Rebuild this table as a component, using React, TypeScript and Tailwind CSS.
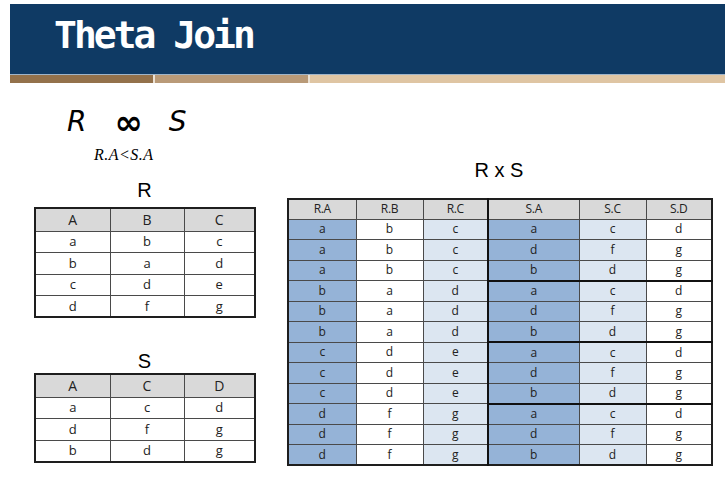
import React from "react";

const R = [
  ["a", "b", "c"],
  ["b", "a", "d"],
  ["c", "d", "e"],
  ["d", "f", "g"],
];
const S = [
  ["a", "c", "d"],
  ["d", "f", "g"],
  ["b", "d", "g"],
];
const RxS = R.flatMap((r) => S.map((s) => [...r, ...s]));

const cellFont = { fontFamily: "'Open Sans', 'Noto Sans', sans-serif" };

function SmallTable({ head, rows }: { head: string[]; rows: string[][] }) {
  const widths = [75, 74, 71];
  return (
    <table className="table-fixed border-collapse border-2 border-[#1e1e1e] text-[13px] text-[#222]" style={{ ...cellFont, width: 220 }}>
      <colgroup>
        {widths.map((w, i) => (
          <col key={i} style={{ width: w }} />
        ))}
      </colgroup>
      <thead>
        <tr className="h-[23px] bg-[#d9d9d9]">
          {head.map((h) => (
            <th key={h} className="border border-[#4a4a4a] p-0 text-center text-[14px] font-normal leading-none">
              {h}
            </th>
          ))}
        </tr>
      </thead>
      <tbody>
        {rows.map((r, i) => (
          <tr key={i} className="h-[21.5px] bg-white">
            {r.map((v, j) => (
              <td key={j} className="border border-[#4a4a4a] p-0 text-center leading-none">
                {v}
              </td>
            ))}
          </tr>
        ))}
      </tbody>
    </table>
  );
}

function ProductTable() {
  const head = ["R.A", "R.B", "R.C", "S.A", "S.C", "S.D"];
  const widths = [68, 67, 65, 91, 67, 66];
  const fills = ["bg-[#95b3d7]", "bg-white", "bg-[#dce6f1]", "bg-[#95b3d7]", "bg-[#dce6f1]", "bg-white"];
  return (
    <table className="table-fixed border-collapse border-2 border-[#1e1e1e] text-[12px] text-[#222]" style={{ ...cellFont, width: 424 }}>
      <colgroup>
        {widths.map((w, i) => (
          <col key={i} style={{ width: w }} />
        ))}
      </colgroup>
      <thead>
        <tr className="h-[20px] bg-[#d9d9d9]">
          {head.map((h, j) => (
            <th
              key={h}
              className={`border border-[#4a4a4a] p-0 text-center text-[12px] font-normal leading-none tracking-tight ${j === 3 ? "border-l-2 border-l-[#111]" : ""}`}
            >
              {h}
            </th>
          ))}
        </tr>
      </thead>
      <tbody>
        {RxS.map((r, i) => (
          <tr key={i} className="h-[20.5px]">
            {r.map((v, j) => {
              const groupEnd = i % 3 === 2 && i < 11 && j >= 3;
              return (
                <td
                  key={j}
                  className={`border border-[#4a4a4a] p-0 text-center leading-none ${fills[j]} ${j === 3 ? "border-l-2 border-l-[#111]" : ""} ${groupEnd ? "border-b-2 border-b-[#111]" : ""}`}
                >
                  {v}
                </td>
              );
            })}
          </tr>
        ))}
      </tbody>
    </table>
  );
}

export default function App() {
  return (
    <div className="h-[479px] w-[725px] overflow-hidden bg-white">
      {/* title bar */}
      <div className="ml-[10px] pt-[4px]">
        <div className="h-[70px] bg-[#0f3a64] pl-[44px] pt-[12px]">
          <h1
            className="text-[38px] font-bold leading-none tracking-[-3px] text-white"
            style={{ fontFamily: "'DejaVu Sans Mono', 'Liberation Mono', monospace" }}
          >
            Theta Join
          </h1>
        </div>
        <div className="h-px bg-[#9fb4c9]" />
        <div className="flex h-[8px] gap-[2px] bg-[#ece2d4]">
          <div className="w-[143px] bg-[#93714b]" />
          <div className="w-[153px] bg-[#b99a78]" />
          <div className="flex-1 bg-[#dfc5a3]" />
        </div>
      </div>

      <div className="flex">
        {/* left column */}
        <div className="ml-[34px] w-[221px]">
          <div
            className="mt-[25px] flex h-[28px] items-center text-[28px] italic leading-none text-black"
            style={{ fontFamily: "'DejaVu Sans', 'Liberation Sans', sans-serif" }}
          >
            <span className="ml-[33px]">R</span>
            <span className="ml-[28px] text-[34px] font-bold not-italic leading-none">∞</span>
            <span className="ml-[26px]">S</span>
          </div>
          <div
            className="mt-[11px] ml-[60px] text-[16px] italic leading-none tracking-[0.5px] text-black"
            style={{ fontFamily: "'Liberation Serif', serif" }}
          >
            R.A&lt;S.A
          </div>
          <div
            className="mt-[17px] text-center text-[20px] leading-none text-black"
            style={{ fontFamily: "'Liberation Sans', Arial, sans-serif" }}
          >
            R
          </div>
          <div className="mt-[7px]">
            <SmallTable head={["A", "B", "C"]} rows={R} />
          </div>
          <div
            className="mt-[33px] text-center text-[20px] leading-none text-black"
            style={{ fontFamily: "'Liberation Sans', Arial, sans-serif" }}
          >
            S
          </div>
          <div className="mt-[2px]">
            <SmallTable head={["A", "C", "D"]} rows={S} />
          </div>
        </div>

        {/* right column */}
        <div className="ml-[32px]">
          <div
            className="mt-[77px] text-center text-[20px] leading-none text-black"
            style={{ fontFamily: "'Liberation Sans', Arial, sans-serif", width: 424 }}
          >
            R x S
          </div>
          <div className="mt-[18px]">
            <ProductTable />
          </div>
        </div>
      </div>
    </div>
  );
}
